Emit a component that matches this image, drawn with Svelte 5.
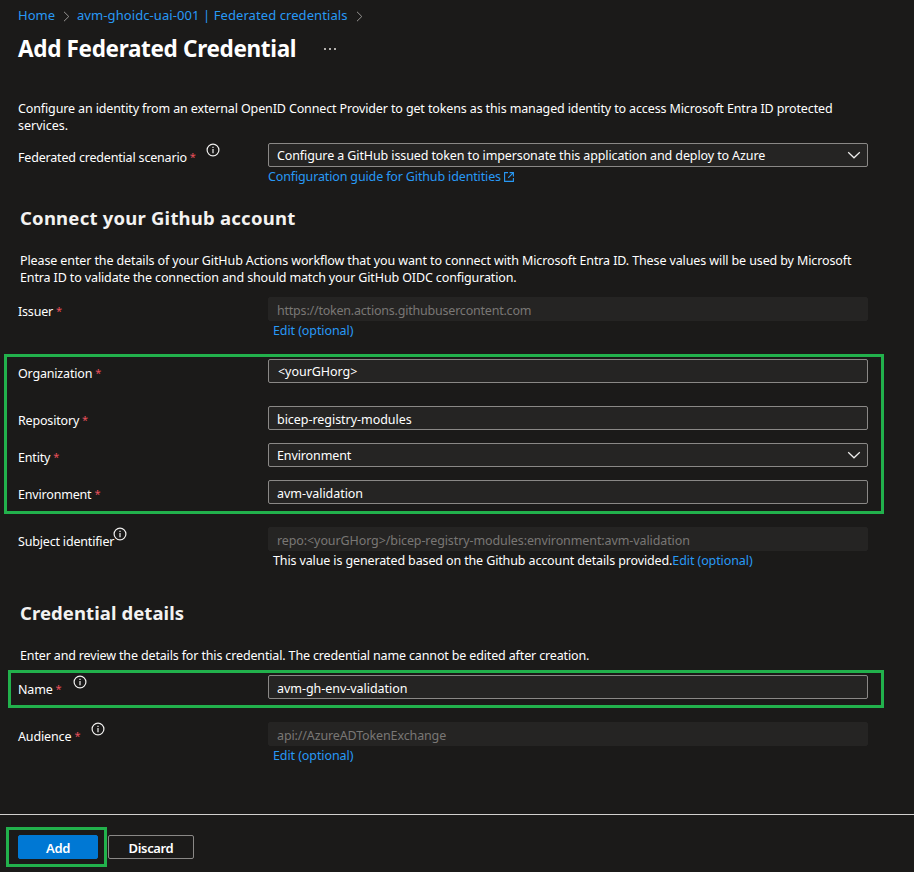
<script>
  const githubFields = [
    { label: 'Organization', value: '<yourGHorg>', kind: 'org' },
    { label: 'Repository', value: 'bicep-registry-modules', kind: 'repo' },
    { label: 'Entity', value: 'Environment', kind: 'entity', select: true },
    { label: 'Environment', value: 'avm-validation', kind: 'env' },
  ];
</script>

{#snippet info()}
  <svg class="info" width="14" height="14" viewBox="0 0 14 14" fill="none" aria-hidden="true">
    <circle cx="7" cy="7" r="5.9" stroke="#f0efee" stroke-width="1.2" />
    <path d="M7 6v4.2M7 3.8v1.3" stroke="#f0efee" stroke-width="1.2" />
  </svg>
{/snippet}

{#snippet chevron()}
  <svg class="chevron" width="14" height="8" viewBox="0 0 14 8" fill="none" aria-hidden="true">
    <path d="M1.2 1.2 7 6.8l5.8-5.6" stroke="#f0efee" stroke-width="1.2" />
  </svg>
{/snippet}

{#snippet crumb()}
  <svg class="crumb" width="7" height="11" viewBox="0 0 7 11" fill="none" aria-hidden="true">
    <path d="M1 .8 5.8 5.5 1 10.2" stroke="#979593" stroke-width="1" />
  </svg>
{/snippet}

<div class="page">
  <nav>
    <a href="#home">Home</a>
    {@render crumb()}
    <a class="resource" href="#credentials">avm-ghoidc-uai-001 | Federated credentials</a>
    {@render crumb()}
  </nav>
  <header>
    <h1>Add Federated Credential</h1>
    <span class="dots"><i></i><i></i><i></i></span>
  </header>

  <main>
    <p class="intro">
      <span class="line1">Configure an identity from an external OpenID Connect Provider to get tokens as this managed identity to access Microsoft Entra ID protected</span><br />services.
    </p>

    <div class="row scenario">
      <div class="label"><span class="t">Federated credential scenario</span><b>*</b>{@render info()}</div>
      <div class="control">
        <div class="box select"><span class="t">Configure a GitHub issued token to impersonate this application and deploy to Azure</span>{@render chevron()}</div>
        <div class="under guide">
          <a href="#guide">Configuration guide for Github identities</a>
          <svg width="10" height="10" viewBox="0 0 10 10" fill="none" aria-hidden="true">
            <path d="M4 .6H.6v8.8h8.8V6M5.6.6h3.8v3.8M9.2.8 4.2 5.8" stroke="#2899f5" stroke-width="1.1" />
          </svg>
        </div>
      </div>
    </div>

    <h2 class="connect">Connect your Github account</h2>
    <p class="details">
      <span class="line2">Please enter the details of your GitHub Actions workflow that you want to connect with Microsoft Entra ID. These values will be used by Microsoft</span><br /><span class="line3">Entra ID to validate the connection and should match your GitHub OIDC configuration.</span>
    </p>

    <div class="row issuer">
      <div class="label"><span class="t">Issuer</span><b>*</b></div>
      <div class="control">
        <div class="box disabled"><span class="t">https://token.actions.githubusercontent.com</span></div>
        <div class="under"><a href="#issuer">Edit (optional)</a></div>
      </div>
    </div>

    <section class="marked account">
      {#each githubFields as field}
        <div class="row {field.kind}">
          <div class="label"><span class="t">{field.label}</span><b>*</b></div>
          <div class="control">
            <div class="box" class:select={field.select}><span class="t">{field.value}</span>{#if field.select}{@render chevron()}{/if}</div>
          </div>
        </div>
      {/each}
    </section>

    <div class="row subject">
      <div class="label"><span class="t">Subject identifier</span>{@render info()}</div>
      <div class="control">
        <div class="box disabled"><span class="t">repo:&lt;yourGHorg&gt;/bicep-registry-modules:environment:avm-validation</span></div>
        <div class="under"><span class="note">This value is generated based on the Github account details provided.</span><a href="#subject">Edit (optional)</a></div>
      </div>
    </div>

    <h2 class="credential">Credential details</h2>
    <p class="review">Enter and review the details for this credential. The credential name cannot be edited after creation.</p>

    <section class="marked naming">
      <div class="row name">
        <div class="label"><span class="t">Name</span><b>*</b>{@render info()}</div>
        <div class="control"><div class="box"><span class="t">avm-gh-env-validation</span></div></div>
      </div>
    </section>

    <div class="row audience">
      <div class="label"><span class="t">Audience</span><b>*</b>{@render info()}</div>
      <div class="control">
        <div class="box disabled"><span class="t">api://AzureADTokenExchange</span></div>
        <div class="under"><a href="#audience">Edit (optional)</a></div>
      </div>
    </div>
  </main>

  <footer>
    <div class="marked action"><button class="primary">Add</button></div>
    <button class="discard">Discard</button>
  </footer>
</div>

<style>
  :global(body) { margin: 0; background: #1b1a19; }
  *, *::after { box-sizing: border-box; }
  .page {
    width: 914px; height: 872px; overflow: hidden;
    display: flex; flex-direction: column;
    background: #1b1a19; color: #fff;
    font: 12.5px/17px "Noto Sans", "Open Sans", sans-serif;
    white-space: nowrap;
  }
  a { color: #2899f5; text-decoration: none; }
  p, h1, h2 { margin: 0; }
  svg { flex: none; display: block; }

  nav { height: 31px; padding: 0 0 0 18px; display: flex; align-items: center; font-size: 13px; }
  nav .crumb { margin: 1px 7px 0 8px; }
  nav .resource { letter-spacing: .08px; }
  header { height: 36px; padding-left: 18px; display: flex; align-items: center; }
  h1 { font-size: 22.5px; line-height: 32px; font-weight: 700; width: 278px; letter-spacing: -.33px; }
  .dots { display: flex; gap: 3px; margin-left: 28px; }
  .dots i { width: 2px; height: 2px; background: #b3b0ad; }

  main { height: 747px; flex: none; padding-top: 33px; }
  .intro { margin-left: 18px; height: 43px; }
  .line1 { letter-spacing: -.128px; }
  .line2 { letter-spacing: -.112px; }
  .line3 { letter-spacing: -.126px; }
  .row { display: flex; height: 24px; padding-left: 18px; }
  .label { width: 250px; flex: none; height: 24px; display: flex; padding-top: 6px; letter-spacing: -.18px; }
  .label b { color: #e8505b; font-weight: 400; width: 6px; margin: -1px 0 0 3px; font-size: 11px; letter-spacing: 0; }
  .label .info { margin: -6px 0 0 11px; }
  .scenario .label .info { margin-left: 10.5px; }
  .subject .label .info { margin-left: -1px; }
  .audience .t { letter-spacing: -.13px; }
  .control { width: 600px; flex: none; }
  .box {
    height: 24px; padding: 2px 6px 0 8px;
    display: flex; align-items: center; justify-content: space-between;
    background: #252423; border: 1px solid #8a8886; border-radius: 2px;
    letter-spacing: -.04px;
  }
  .select { padding-top: 0; letter-spacing: -.11px; }
  .org .box { padding: 0 6px 0 9px; }
  .disabled { border-color: #252423; color: #797775; letter-spacing: -.1px; }
  .issuer .disabled { letter-spacing: -.21px; }
  .under { height: 17px; margin-top: 1px; padding-left: 5px; display: flex; align-items: center; }
  .under a { letter-spacing: -.09px; }
  .note { letter-spacing: -.128px; }
  .guide { padding-left: 0; gap: 3px; }
  .guide a { letter-spacing: -.14px; }

  h2 { margin-left: 20px; font-size: 18.5px; line-height: 26px; font-weight: 700; color: #f3f2f1; }
  .scenario { height: 62px; }
  .connect { height: 47px; letter-spacing: .22px; }
  .details { margin-left: 20px; height: 45px; }
  .issuer { height: 57px; }

  /* highlight frames drawn around the fields to fill in */
  .marked { position: relative; }
  .marked::after { content: ""; position: absolute; border: 3px solid #22b14c; pointer-events: none; }
  .account { padding-top: 5px; height: 160px; margin-bottom: 13px; }
  .account::after { left: 4px; top: 0; width: 880px; height: 160px; }
  .org { height: 47px; }
  .repo, .entity { height: 37px; }
  .subject { height: 73px; }
  .credential { height: 47px; letter-spacing: .08px; }
  .review { margin-left: 20px; height: 23px; letter-spacing: -.147px; }
  .naming { height: 38px; padding-top: 5px; margin-bottom: 14px; }
  .naming::after { left: 8px; top: 0; width: 876px; height: 38px; }

  footer { height: 58px; border-top: 1px solid #d2d0ce; padding-top: 20px; display: flex; }
  .action { width: 108px; padding-left: 18px; }
  .action::after { left: 6px; top: -8px; width: 101px; height: 40px; }
  button { height: 24px; padding: 2px 0 0; border-radius: 2px; font: 600 13px/20px "Noto Sans", "Open Sans", sans-serif; letter-spacing: -.35px; color: #fff; }
  .primary { display: block; width: 80px; background: #0078d4; border: 1px solid #0078d4; }
  .discard { width: 86px; background: #1b1a19; border: 1px solid #8a8886; }
</style>
